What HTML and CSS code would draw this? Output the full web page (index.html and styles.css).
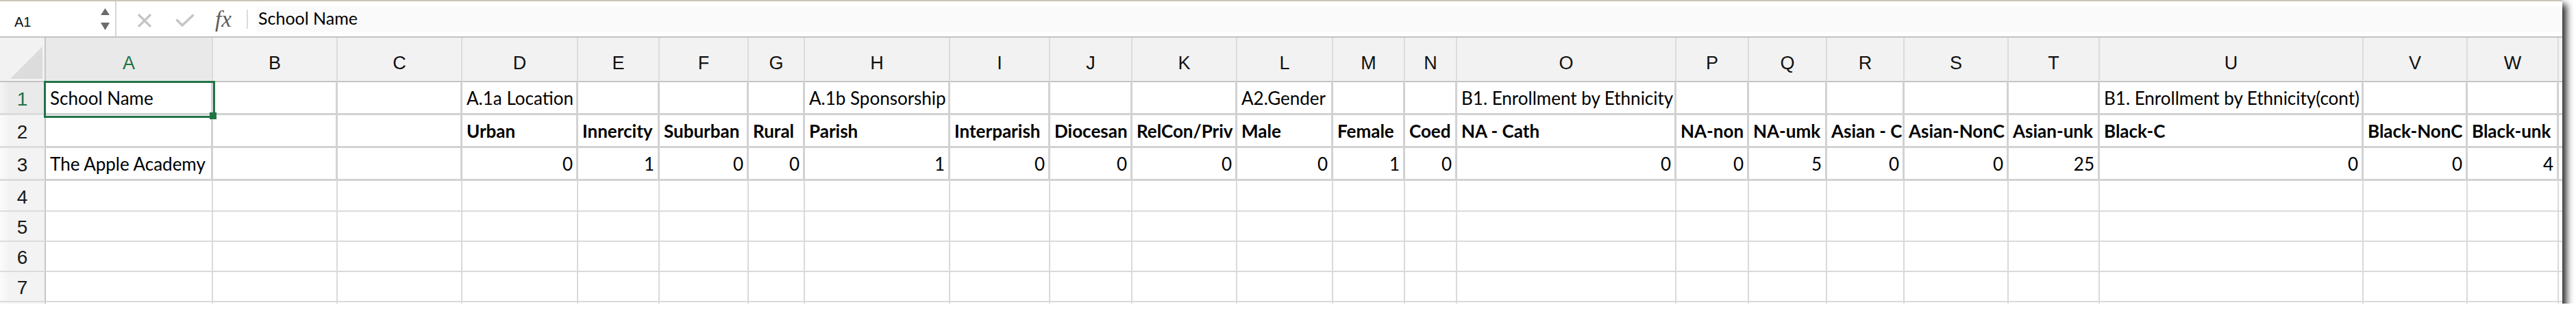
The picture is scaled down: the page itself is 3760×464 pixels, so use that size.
FILE: index.html
```html
<!DOCTYPE html>
<html lang="en">
<head>
<meta charset="utf-8">
<title>Spreadsheet</title>
<link rel="stylesheet" href="styles.css">
</head>
<body>
<div class="window">
  <div class="formula-bar">
    <div class="namebox">
      <span class="ref">A1</span>
      <svg class="stepper" width="13" height="32" viewBox="0 0 13 32"><polygon points="6.5,0 13,10 0,10" fill="#6b6b6b"/><polygon points="0,21 13,21 6.5,32" fill="#6b6b6b"/></svg>
    </div>
    <svg class="icon-x" width="22" height="20" viewBox="0 0 22 20"><path d="M2 1 L20 19 M20 1 L2 19" stroke="#c4c4c4" stroke-width="3.2" fill="none"/></svg>
    <svg class="icon-check" width="28" height="19" viewBox="0 0 28 19"><path d="M1.5 8.5 L10 17 L26.5 1.5" stroke="#c6c6c6" stroke-width="3.6" fill="none"/></svg>
    <span class="fx">fx</span>
    <span class="fb-sep"></span>
    <div class="fb-input">School Name</div>
  </div>
  <div class="sheet">
    <div class="row hdr">
      <div class="corner"><svg width="67" height="63" viewBox="0 0 67 63"><polygon points="62,13 62,60 15,60" fill="#dcdcdc"/></svg></div>
      <div class="ch sel">A</div><div class="ch">B</div><div class="ch">C</div><div class="ch">D</div><div class="ch">E</div><div class="ch">F</div><div class="ch">G</div><div class="ch">H</div><div class="ch">I</div><div class="ch">J</div><div class="ch">K</div><div class="ch">L</div><div class="ch">M</div><div class="ch">N</div><div class="ch">O</div><div class="ch">P</div><div class="ch">Q</div><div class="ch">R</div><div class="ch">S</div><div class="ch">T</div><div class="ch">U</div><div class="ch">V</div><div class="ch">W</div><div class="ch"></div>
    </div>
    <div class="row bordered r1">
      <div class="rh sel">1</div>
      <div class="c a1">School Name</div><div class="c"></div><div class="c"></div>
      <div class="c">A.1a Location</div><div class="c"></div><div class="c"></div><div class="c"></div>
      <div class="c">A.1b Sponsorship</div><div class="c"></div><div class="c"></div><div class="c"></div>
      <div class="c">A2.Gender</div><div class="c"></div><div class="c"></div>
      <div class="c">B1. Enrollment by Ethnicity</div><div class="c"></div><div class="c"></div><div class="c"></div><div class="c"></div><div class="c"></div>
      <div class="c">B1. Enrollment by Ethnicity(cont)</div><div class="c"></div><div class="c"></div><div class="c"></div>
    </div>
    <div class="row bordered r2">
      <div class="rh">2</div>
      <div class="c"></div><div class="c"></div><div class="c"></div>
      <div class="c b">Urban</div><div class="c b">Innercity</div><div class="c b">Suburban</div><div class="c b">Rural</div>
      <div class="c b">Parish</div><div class="c b">Interparish</div><div class="c b">Diocesan</div><div class="c b">RelCon/Priv</div>
      <div class="c b">Male</div><div class="c b">Female</div><div class="c b">Coed</div>
      <div class="c b">NA - Cath</div><div class="c b">NA-non</div><div class="c b">NA-umk</div><div class="c b">Asian - C</div><div class="c b">Asian-NonC</div><div class="c b">Asian-unk</div>
      <div class="c b">Black-C</div><div class="c b">Black-NonC</div><div class="c b">Black-unk</div><div class="c"></div>
    </div>
    <div class="row bordered r3">
      <div class="rh">3</div>
      <div class="c">The Apple Academy</div><div class="c"></div><div class="c"></div>
      <div class="c num">0</div><div class="c num">1</div><div class="c num">0</div><div class="c num">0</div>
      <div class="c num">1</div><div class="c num">0</div><div class="c num">0</div><div class="c num">0</div>
      <div class="c num">0</div><div class="c num">1</div><div class="c num">0</div>
      <div class="c num">0</div><div class="c num">0</div><div class="c num">5</div><div class="c num">0</div><div class="c num">0</div><div class="c num">25</div>
      <div class="c num">0</div><div class="c num">0</div><div class="c num">4</div><div class="c"></div>
    </div>
    <div class="row r4">
      <div class="rh">4</div>
      <div class="c"></div><div class="c"></div><div class="c"></div><div class="c"></div><div class="c"></div><div class="c"></div><div class="c"></div><div class="c"></div><div class="c"></div><div class="c"></div><div class="c"></div><div class="c"></div><div class="c"></div><div class="c"></div><div class="c"></div><div class="c"></div><div class="c"></div><div class="c"></div><div class="c"></div><div class="c"></div><div class="c"></div><div class="c"></div><div class="c"></div><div class="c"></div>
    </div>
    <div class="row r5">
      <div class="rh">5</div>
      <div class="c"></div><div class="c"></div><div class="c"></div><div class="c"></div><div class="c"></div><div class="c"></div><div class="c"></div><div class="c"></div><div class="c"></div><div class="c"></div><div class="c"></div><div class="c"></div><div class="c"></div><div class="c"></div><div class="c"></div><div class="c"></div><div class="c"></div><div class="c"></div><div class="c"></div><div class="c"></div><div class="c"></div><div class="c"></div><div class="c"></div><div class="c"></div>
    </div>
    <div class="row r6">
      <div class="rh">6</div>
      <div class="c"></div><div class="c"></div><div class="c"></div><div class="c"></div><div class="c"></div><div class="c"></div><div class="c"></div><div class="c"></div><div class="c"></div><div class="c"></div><div class="c"></div><div class="c"></div><div class="c"></div><div class="c"></div><div class="c"></div><div class="c"></div><div class="c"></div><div class="c"></div><div class="c"></div><div class="c"></div><div class="c"></div><div class="c"></div><div class="c"></div><div class="c"></div>
    </div>
    <div class="row r7">
      <div class="rh">7</div>
      <div class="c"></div><div class="c"></div><div class="c"></div><div class="c"></div><div class="c"></div><div class="c"></div><div class="c"></div><div class="c"></div><div class="c"></div><div class="c"></div><div class="c"></div><div class="c"></div><div class="c"></div><div class="c"></div><div class="c"></div><div class="c"></div><div class="c"></div><div class="c"></div><div class="c"></div><div class="c"></div><div class="c"></div><div class="c"></div><div class="c"></div><div class="c"></div>
    </div>
    <div class="row r8">
      <div class="rh"></div>
      <div class="c"></div><div class="c"></div><div class="c"></div><div class="c"></div><div class="c"></div><div class="c"></div><div class="c"></div><div class="c"></div><div class="c"></div><div class="c"></div><div class="c"></div><div class="c"></div><div class="c"></div><div class="c"></div><div class="c"></div><div class="c"></div><div class="c"></div><div class="c"></div><div class="c"></div><div class="c"></div><div class="c"></div><div class="c"></div><div class="c"></div><div class="c"></div>
    </div>
  </div>
</div>
</body>
</html>
```
FILE: styles.css
```css
* { box-sizing: border-box; }
html, body { margin: 0; padding: 0; background: #ffffff; }

.window {
  width: 3740px;
  height: 443px;
  overflow: hidden;
  background: #ffffff;
  box-shadow: 5px 7px 10px 1px rgba(0, 0, 0, 0.85);
  font-family: Lato, "Liberation Sans", sans-serif;
  color: #000;
}

/* ---------- formula bar ---------- */
.formula-bar {
  height: 55px;
  border-top: 2px solid #cac6b7;
  border-bottom: 2px solid #c2c2c2;
  display: flex;
  align-items: center;
  background: #ffffff;
}
.namebox {
  width: 170px;
  height: 100%;
  border-right: 2px solid #d6d6d6;
  display: flex;
  align-items: center;
  justify-content: space-between;
  padding: 0 8px 0 21px;
}
.ref {
  font-family: "Liberation Sans", Arial, sans-serif;
  font-size: 20px;
  color: #111;
  padding-top: 9px;
}
.stepper { display: block; }
.icon-x { margin-left: 30px; margin-top: 5px; display: block; }
.icon-check { margin-left: 34px; margin-top: 3px; display: block; }
.fx {
  margin-left: 30px;
  font-family: "Liberation Serif", "Times New Roman", serif;
  font-style: italic;
  font-size: 33px;
  line-height: 36px;
  color: #5c5c5c;
  width: 30px;
}
.fb-sep {
  margin-left: 16px;
  width: 2px;
  height: 28px;
  background: #dcdcdc;
}
.fb-input {
  margin-left: 13px;
  flex: 1;
  height: 38px;
  padding: 0 0 3px 2px;
  background: #fafafa;
  font-size: 25px;
  line-height: 35px;
  color: #000;
}

/* ---------- sheet grid ---------- */
.sheet {
  --cols: 67px 244px 182px 182px 169px 119px 130px 82px 212px 146px 120px 153px 140px 105px 76px 320px 106px 114px 113px 152px 133px 385px 152px 133px 100px;
}
.row {
  display: grid;
  grid-template-columns: var(--cols);
}
.hdr { height: 65px; }
.r1, .r2, .r3 { height: 48px; }
.r4 { height: 45px; }
.r5, .r6, .r7, .r8 { height: 44px; }

.corner {
  background: #f2f2f2;
  border-right: 2px solid #c6c6c6;
  border-bottom: 2px solid #c4c4c4;
}
.corner svg { display: block; }

.ch {
  background: #f2f2f2;
  border-right: 2px solid #dcdcdc;
  border-bottom: 2px solid #c4c4c4;
  display: flex;
  align-items: center;
  justify-content: center;
  padding-top: 12px;
  font-family: "Liberation Sans", Arial, sans-serif;
  font-size: 27px;
  color: #111;
}
.ch.sel {
  background: #e9e9e9;
  color: #217346;
}

.rh {
  background: linear-gradient(to right, #fbfbfb, #f3f3f3 14px);
  border-right: 2px solid #c6c6c6;
  border-bottom: 2px solid #dcdcdc;
  display: flex;
  align-items: center;
  justify-content: center;
  padding-top: 4px;
  font-family: "Liberation Sans", Arial, sans-serif;
  font-size: 28px;
  color: #1a1a1a;
}
.rh.sel {
  background: linear-gradient(to right, #f4f4f4, #eaeaea 14px);
  color: #217346;
}

.c {
  border-right: 2px solid #dadada;
  border-bottom: 2px solid #dadada;
  display: flex;
  align-items: flex-end;
  padding: 0 5px 7px 6px;
  font-size: 26px;
  line-height: 30px;
  white-space: nowrap;
}
.bordered .c {
  border-right-width: 3px;
  border-bottom-width: 3px;
  border-color: #d2d2d2;
}
.bordered .rh { border-bottom-width: 3px; }
.c.num { justify-content: flex-end; }
.c.b { font-weight: 700; }

/* active cell selection */
.a1 { position: relative; }
.a1::before {
  content: "";
  position: absolute;
  left: -3px;
  top: -2px;
  right: -6px;
  bottom: -7px;
  border: 3px solid #217346;
}
.a1::after {
  content: "";
  position: absolute;
  right: -8px;
  bottom: -9px;
  width: 10px;
  height: 10px;
  background: #217346;
}
```
